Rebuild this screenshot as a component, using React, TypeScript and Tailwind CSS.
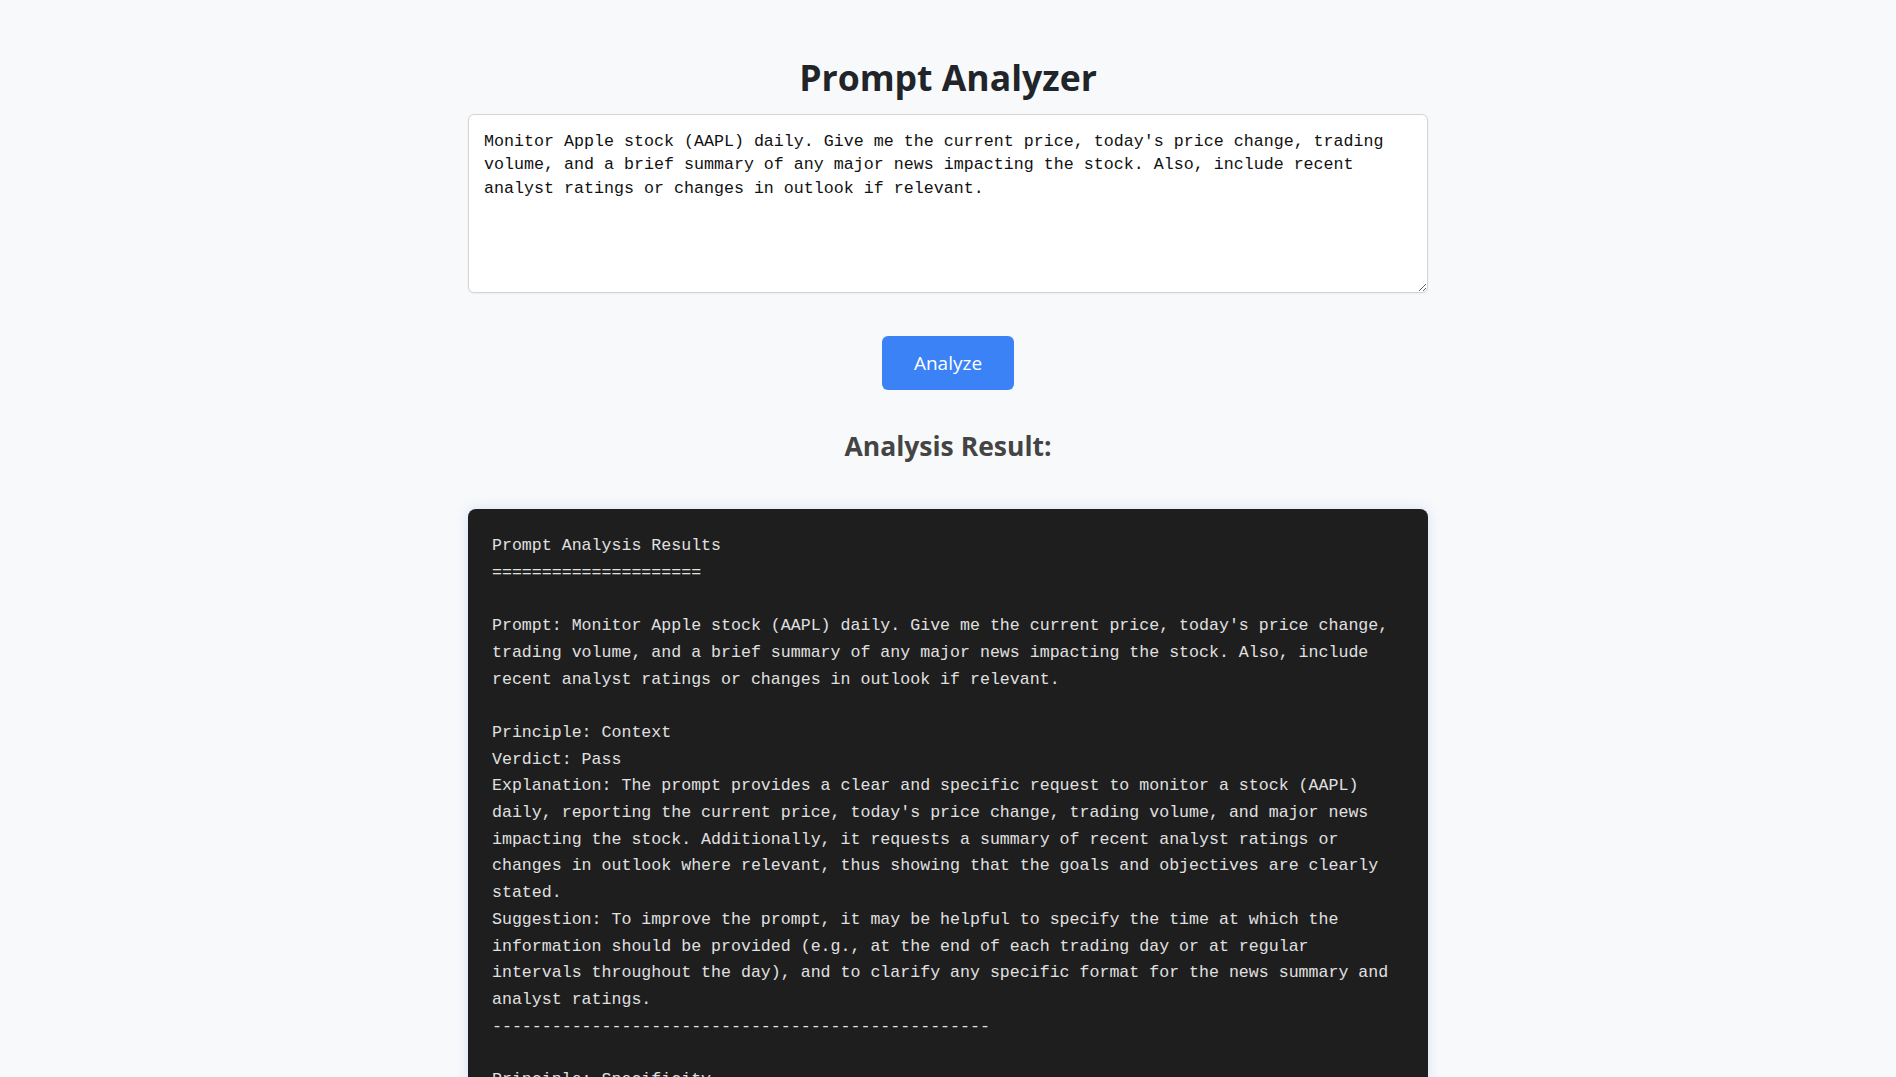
import React, { useState } from 'react';

const PROMPT =
  "Monitor Apple stock (AAPL) daily. Give me the current price, today's price change, trading volume, and a brief summary of any major news impacting the stock. Also, include recent analyst ratings or changes in outlook if relevant.";

const RESULT = `Prompt Analysis Results
=====================

Prompt: ${PROMPT}

Principle: Context
Verdict: Pass
Explanation: The prompt provides a clear and specific request to monitor a stock (AAPL) daily, reporting the current price, today's price change, trading volume, and major news impacting the stock. Additionally, it requests a summary of recent analyst ratings or changes in outlook where relevant, thus showing that the goals and objectives are clearly stated.
Suggestion: To improve the prompt, it may be helpful to specify the time at which the information should be provided (e.g., at the end of each trading day or at regular intervals throughout the day), and to clarify any specific format for the news summary and analyst ratings.
--------------------------------------------------

Principle: Specificity
Verdict: Pass
Explanation: The prompt clearly lists each piece of information that should be reported.
Suggestion: Consider naming preferred data sources for price and news information.
--------------------------------------------------
`;

const App: React.FC = () => {
  const [prompt, setPrompt] = useState(PROMPT);

  return (
    <div className="min-h-screen bg-[#f8f9fa] font-['Open_Sans','Noto_Sans',sans-serif]">
      <div className="max-w-[960px] mx-auto pt-[56px] pb-10">
        <h1 className="text-center text-[35.6px] leading-[42px] font-bold text-[#212529]">
          Prompt Analyzer
        </h1>

        <textarea
          value={prompt}
          onChange={(e) => setPrompt(e.target.value)}
          className="mt-[16px] block w-full h-[179px] bg-white border border-[#d4d4d4] rounded-md shadow-[0_1px_2px_rgba(0,0,0,0.05)] px-[15px] pt-[15px] pb-3 font-['Liberation_Mono',monospace] text-[16.67px] leading-[23.3px] text-[#111] outline-none"
        />

        <div className="flex justify-center mt-[43px]">
          <button className="w-[132px] h-[54px] rounded-md bg-[#3b82f6] text-white text-[19px] hover:bg-[#2563eb]">
            Analyze
          </button>
        </div>

        <h2 className="mt-[41px] text-center text-[26.5px] leading-[31px] font-bold text-[#444]">
          Analysis Result:
        </h2>

        <pre className="mt-[47px] bg-[#1e1e1e] rounded-lg p-6 shadow-[0_0_14px_rgba(59,130,246,0.18)] whitespace-pre-wrap font-['Liberation_Mono',monospace] text-[16.6px] leading-[26.7px] text-[#e0e0e0]">
          {RESULT}
        </pre>
      </div>
    </div>
  );
};

export default App;
